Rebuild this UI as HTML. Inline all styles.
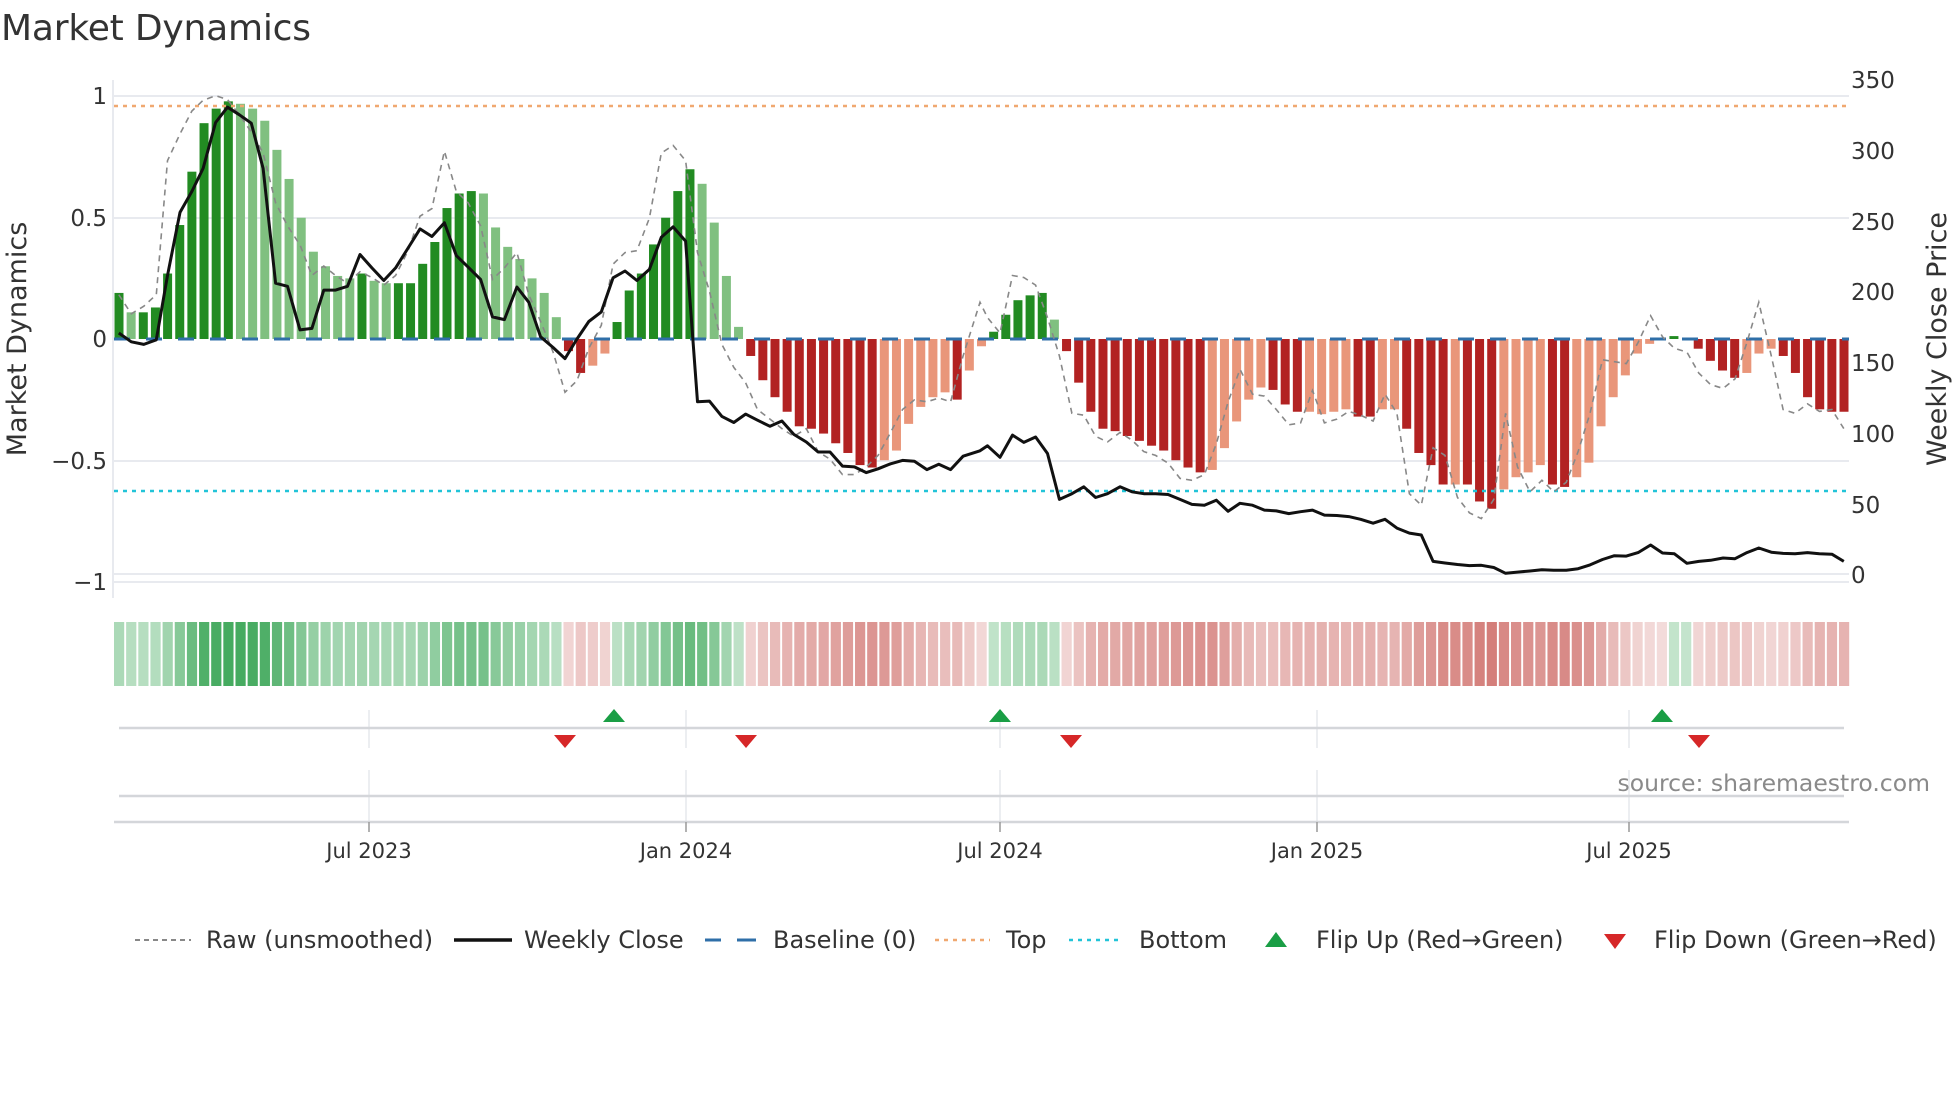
<!DOCTYPE html>
<html><head><meta charset="utf-8"><style>
html,body{margin:0;padding:0;background:#fff;}
svg{display:block;font-family:"DejaVu Sans","Liberation Sans",sans-serif;}
</style></head><body>
<svg id="s" width="1960" height="1102" viewBox="0 0 1960 1102" xmlns="http://www.w3.org/2000/svg">
<rect width="1960" height="1102" fill="#fff"/>
<text x="1" y="40" font-size="36" fill="#333" textLength="310">Market Dynamics</text>
<g stroke="#e8eaef" stroke-width="2">
<line x1="114" y1="96" x2="1849" y2="96"/>
<line x1="114" y1="218" x2="1849" y2="218"/>
<line x1="114" y1="461" x2="1849" y2="461"/>
<line x1="114" y1="574" x2="1849" y2="574"/>
<line x1="114" y1="582" x2="1849" y2="582"/>
<line x1="113" y1="80" x2="113" y2="598"/>
</g>
<g font-size="23" fill="#333" text-anchor="end">
<text x="107" y="104">1</text>
<text x="107" y="226">0.5</text>
<text x="107" y="347">0</text>
<text x="107" y="469">−0.5</text>
<text x="107" y="590">−1</text>
</g>
<g font-size="23" fill="#333">
<text x="1851" y="88">350</text>
<text x="1851" y="159">300</text>
<text x="1851" y="230">250</text>
<text x="1851" y="300">200</text>
<text x="1851" y="371">150</text>
<text x="1851" y="442">100</text>
<text x="1851" y="513">50</text>
<text x="1851" y="583">0</text>
</g>
<text transform="translate(26,339) rotate(-90)" font-size="27" fill="#333" text-anchor="middle">Market Dynamics</text>
<text transform="translate(1946,339) rotate(-90)" font-size="27" fill="#333" text-anchor="middle">Weekly Close Price</text>
<g id="bars"></g>
<line x1="114" y1="339" x2="1849" y2="339" stroke="#2f6fa8" stroke-width="3" stroke-dasharray="16,16"/>
<line x1="114" y1="106" x2="1849" y2="106" stroke="#f0a870" stroke-width="2.5" stroke-dasharray="4,5"/>
<line x1="114" y1="491" x2="1849" y2="491" stroke="#22c4d8" stroke-width="2.5" stroke-dasharray="4,5"/>
<polyline id="raw" fill="none" stroke="#888" stroke-width="1.6" stroke-dasharray="6,5"/>
<polyline id="close" fill="none" stroke="#111" stroke-width="3" stroke-linejoin="round"/>
<g id="strip"></g>
<g stroke="#e6e8ec" stroke-width="1.5">
<line x1="369" y1="710" x2="369" y2="748"/><line x1="686" y1="710" x2="686" y2="748"/><line x1="1000" y1="710" x2="1000" y2="748"/><line x1="1317" y1="710" x2="1317" y2="748"/><line x1="1629" y1="710" x2="1629" y2="748"/>
<line x1="369" y1="770" x2="369" y2="822"/><line x1="686" y1="770" x2="686" y2="822"/><line x1="1000" y1="770" x2="1000" y2="822"/><line x1="1317" y1="770" x2="1317" y2="822"/><line x1="1629" y1="770" x2="1629" y2="822"/>
</g>
<g stroke="#d4d6da" stroke-width="2.5">
<line x1="119" y1="728" x2="1844" y2="728"/>
<line x1="119" y1="796" x2="1844" y2="796"/>
<line x1="114" y1="822" x2="1849" y2="822"/>
</g>
<g stroke="#999" stroke-width="1.5">
<line x1="369" y1="822" x2="369" y2="832"/><line x1="686" y1="822" x2="686" y2="832"/><line x1="1000" y1="822" x2="1000" y2="832"/><line x1="1317" y1="822" x2="1317" y2="832"/><line x1="1629" y1="822" x2="1629" y2="832"/>
</g>
<g fill="#1a9e45">
<polygon points="603,722 625,722 614,709"/><polygon points="989,722 1011,722 1000,709"/><polygon points="1651,722 1673,722 1662,709"/>
</g>
<g fill="#d62728">
<polygon points="554,735 576,735 565,748"/><polygon points="735,735 757,735 746,748"/><polygon points="1060,735 1082,735 1071,748"/><polygon points="1688,735 1710,735 1699,748"/>
</g>
<text x="1930" y="791" font-size="23.5" fill="#8a8a8a" text-anchor="end">source: sharemaestro.com</text>
<g font-size="21" fill="#333" text-anchor="middle">
<text x="369" y="858">Jul 2023</text><text x="686" y="858">Jan 2024</text><text x="1000" y="858">Jul 2024</text><text x="1317" y="858">Jan 2025</text><text x="1629" y="858">Jul 2025</text>
</g>
<g font-size="24" fill="#333">
<line x1="135" y1="940" x2="191" y2="940" stroke="#888" stroke-width="2" stroke-dasharray="5,4"/>
<text x="206" y="948">Raw (unsmoothed)</text>
<line x1="454" y1="940" x2="512" y2="940" stroke="#111" stroke-width="3.5"/>
<text x="524" y="948">Weekly Close</text>
<line x1="703" y1="940" x2="756" y2="940" stroke="#2f6fa8" stroke-width="3" stroke-dasharray="16,16" stroke-dashoffset="-2"/>
<line x1="740" y1="940" x2="756" y2="940" stroke="#2f6fa8" stroke-width="3"/>
<text x="773" y="948">Baseline (0)</text>
<line x1="935" y1="940" x2="990" y2="940" stroke="#f0a870" stroke-width="2.5" stroke-dasharray="4,5"/>
<text x="1006" y="948">Top</text>
<line x1="1069" y1="940" x2="1122" y2="940" stroke="#22c4d8" stroke-width="2.5" stroke-dasharray="4,5"/>
<text x="1139" y="948">Bottom</text>
<polygon points="1265,947 1287,947 1276,932" fill="#1a9e45"/>
<text x="1316" y="948">Flip Up (Red→Green)</text>
<polygon points="1604,934 1626,934 1615,949" fill="#d62728"/>
<text x="1654" y="948">Flip Down (Green→Red)</text>
</g>
</svg>
<script>
var V=[[.19,1],[.11,0],[.11,1],[.13,1],[.27,1],[.47,1],[.69,1],[.89,1],[.95,1],[.98,1],
[.97,0],[.95,0],[.90,0],[.78,0],[.66,0],[.50,0],[.36,0],[.30,0],[.26,0],[.25,0],
[.27,1],[.24,0],[.23,0],[.23,1],[.23,1],[.31,1],[.40,1],[.54,1],[.60,1],[.61,1],
[.60,0],[.46,0],[.38,0],[.33,0],[.25,0],[.19,0],[.09,0],[-.05,1],[-.14,1],[-.11,0],
[-.06,0],[.07,1],[.20,1],[.27,1],[.39,1],[.50,1],[.61,1],[.70,1],[.64,0],[.48,0],
[.26,0],[.05,0],[-.07,1],[-.17,1],[-.24,1],[-.30,1],[-.36,1],[-.37,1],[-.39,1],[-.43,1],
[-.47,1],[-.52,1],[-.53,1],[-.50,0],[-.46,0],[-.35,0],[-.28,0],[-.24,0],[-.22,0],[-.25,1],
[-.13,0],[-.03,0],[.03,1],[.10,1],[.16,1],[.18,1],[.19,1],[.08,0],[-.05,1],[-.18,1],[-.30,1],
[-.37,1],[-.38,1],[-.40,1],[-.42,1],[-.44,1],[-.46,1],[-.50,1],[-.53,1],[-.55,1],[-.54,0],
[-.45,0],[-.34,0],[-.25,0],[-.20,0],[-.21,1],[-.27,1],[-.30,1],[-.30,0],[-.31,0],[-.30,0],
[-.29,0],[-.32,1],[-.32,1],[-.29,0],[-.29,0],[-.37,1],[-.47,1],[-.52,1],[-.60,1],[-.60,0],
[-.60,1],[-.67,1],[-.70,1],[-.62,0],[-.57,0],[-.55,0],[-.52,0],[-.60,1],[-.61,1],[-.57,0],
[-.51,0],[-.36,0],[-.24,0],[-.15,0],[-.06,0],[-.02,0],[0,0],[.012,1],[0,0],[-.04,1],
[-.09,1],[-.13,1],[-.16,1],[-.14,0],[-.06,0],[-.04,0],[-.07,1],[-.14,1],[-.24,1],[-.29,1],
[-.30,1],[-.30,1]];
var NS="http://www.w3.org/2000/svg",n=V.length,x0=119,dx=(1844-119)/(n-1);
var gb=document.getElementById("bars"),gs=document.getElementById("strip");
function R(g,x,y,w,h,f){var r=document.createElementNS(NS,"rect");r.setAttribute("x",x);r.setAttribute("y",y);r.setAttribute("width",w);r.setAttribute("height",h);r.setAttribute("fill",f);g.appendChild(r);}
function mix(c,t){return "rgb("+c.map(function(v){return Math.round(255+(v-255)*t)}).join(",")+")";}
for(var i=0;i<n;i++){var v=V[i][0],d=V[i][1],x=x0+i*dx,h=Math.abs(v)*242.5;
 if(h>0.5){var col=v>0?(d?"#228b22":"#80c080"):(d?"#b22222":"#e9967a");
  R(gb,x-4.5,v>0?339-h:339,9,h,col);}
 var a=Math.abs(v),c=v>=0&&!(v==0&&i>0&&V[i-1][0]<0)?mix([45,160,75],0.28+0.62*a):mix([200,90,85],0.22+0.8*a);
 R(gs,x-5,622,10.2,64,c);}
function P(id,a,b){var s=[];a.forEach(function(p){s.push((p[0]/1.6).toFixed(1)+","+(p[1]/2.613).toFixed(1))});
 b.forEach(function(p){s.push((980+p[0]/1.6).toFixed(1)+","+(p[1]/2.613).toFixed(1))});document.getElementById(id).setAttribute("points",s.join(" "));}
P("close",[[190,870],[210,893],[230,900],[250,888],[268,720],[288,555],[307,500],[325,440],[345,320],[364,280],[383,300],[402,322],[421,440],[441,740],[460,748],[480,862],[499,858],[518,758],[537,758],[556,748],[576,665],[595,700],[614,733],[633,700],[653,648],[672,598],[691,618],[711,582],[730,668],[749,698],[769,730],[788,828],[807,835],[827,750],[846,790],[865,880],[885,908],[904,937],[923,886],[942,840],[962,815],[981,726],[1000,708],[1019,733],[1039,704],[1058,620],[1077,593],[1097,630],[1116,1050],[1135,1048],[1155,1088],[1174,1104],[1193,1082],[1212,1098],[1232,1114],[1251,1100],[1270,1135],[1290,1155],[1309,1181],[1328,1181],[1348,1218],[1367,1220],[1386,1235],[1405,1225],[1425,1212],[1444,1203],[1463,1205],[1483,1227],[1502,1213],[1521,1227],[1541,1192]],
[[0,1178],[12,1165],[32,1195],[52,1137],[70,1156],[89,1142],[108,1185],[127,1305],[147,1290],[166,1272],[185,1300],[204,1290],[224,1272],[243,1285],[262,1290],[281,1290],[301,1292],[320,1305],[339,1318],[359,1320],[378,1307],[397,1336],[416,1315],[436,1320],[455,1333],[474,1335],[494,1342],[513,1337],[532,1333],[551,1346],[571,1347],[590,1350],[609,1357],[629,1367],[648,1357],[667,1380],[687,1393],[706,1398],[725,1467],[744,1471],[764,1475],[783,1478],[802,1477],[822,1483],[841,1498],[860,1495],[880,1492],[899,1489],[918,1490],[938,1490],[957,1486],[976,1476],[996,1462],[1015,1452],[1034,1453],[1053,1444],[1073,1424],[1092,1445],[1111,1447],[1131,1472],[1150,1467],[1169,1464],[1189,1458],[1208,1460],[1227,1444],[1246,1432],[1266,1443],[1285,1446],[1304,1447],[1324,1444],[1343,1447],[1363,1448],[1382,1467]]);
P("raw",[[190,770],[210,820],[230,800],[250,770],[268,420],[288,350],[307,290],[325,262],[345,250],[364,260],[383,300],[402,345],[421,400],[441,530],[460,590],[480,640],[499,720],[518,695],[537,720],[556,740],[576,710],[595,725],[614,745],[633,720],[653,655],[672,565],[691,545],[711,395],[730,500],[749,530],[769,590],[788,730],[807,700],[827,660],[846,770],[865,840],[885,920],[904,1025],[923,995],[942,910],[962,850],[981,690],[1000,660],[1019,655],[1039,570],[1058,400],[1077,380],[1097,420],[1116,660],[1135,760],[1155,900],[1174,960],[1193,1000],[1212,1070],[1232,1095],[1251,1120],[1270,1140],[1290,1120],[1309,1180],[1328,1200],[1348,1240],[1367,1240],[1386,1220],[1405,1190],[1425,1130],[1444,1070],[1463,1045],[1483,1050],[1502,1040],[1521,1050],[1541,930]],
[[0,790],[12,830],[32,870],[52,720],[70,725],[89,745],[108,830],[127,930],[147,1080],[166,1085],[185,1140],[204,1155],[224,1130],[243,1150],[262,1180],[281,1190],[301,1210],[320,1250],[339,1255],[359,1240],[378,1160],[397,1050],[416,965],[436,1030],[455,1035],[474,1070],[494,1110],[513,1105],[532,1020],[551,1105],[571,1095],[590,1075],[609,1085],[629,1100],[648,1030],[667,1080],[687,1290],[706,1320],[725,1170],[744,1190],[764,1300],[783,1340],[802,1355],[822,1305],[841,1080],[860,1220],[880,1285],[899,1255],[918,1285],[938,1260],[957,1180],[976,1080],[996,940],[1015,945],[1034,950],[1053,895],[1073,825],[1092,880],[1111,910],[1131,920],[1150,975],[1169,1005],[1189,1015],[1208,990],[1227,895],[1246,790],[1266,930],[1285,1070],[1304,1080],[1324,1055],[1343,1075],[1363,1070],[1382,1120]]);
</script>
</body></html>
